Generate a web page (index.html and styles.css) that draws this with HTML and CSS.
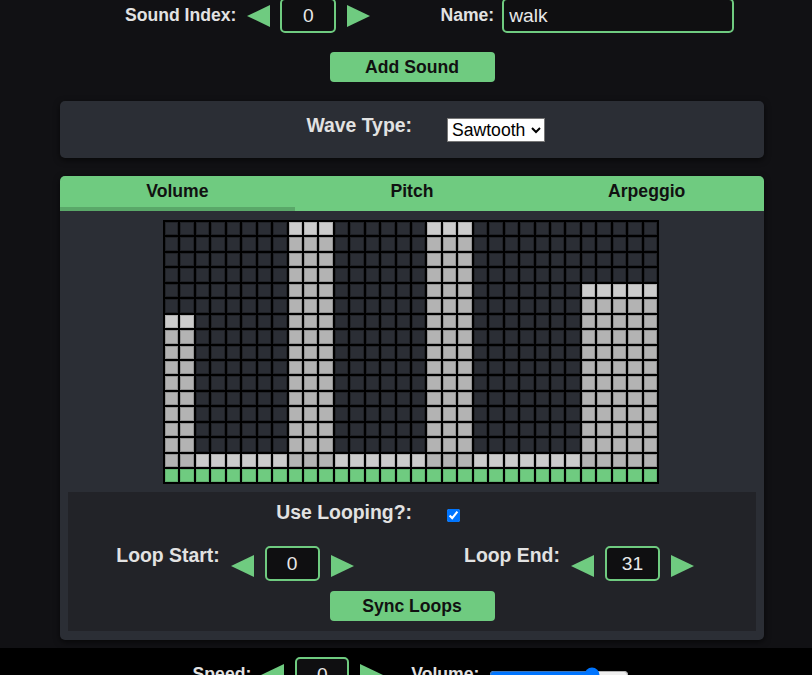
FILE: index.html
```html
<!DOCTYPE html>
<html lang="en">
<head>
<meta charset="utf-8">
<title>Sound Editor</title>
<link rel="stylesheet" href="styles.css">
</head>
<body>
<div class="app">
  <div class="top-row">
    <span class="label lbl-index">Sound Index:</span>
    <svg class="tri tri-l" viewBox="0 0 23 22"><polygon points="23,0 23,22 0,11"/></svg>
    <input class="num num-top" type="text" value="0">
    <svg class="tri tri-r" viewBox="0 0 23 22"><polygon points="0,0 0,22 23,11"/></svg>
    <span class="label lbl-name">Name:</span>
    <input class="name-input" type="text" value="walk">
  </div>
  <button class="btn btn-add">Add Sound</button>

  <section class="panel wave">
    <div class="field-row">
      <div class="field-label">Wave Type:</div>
      <div class="field-ctrl">
        <select class="wave-select">
          <option>Square</option>
          <option selected>Sawtooth</option>
          <option>Triangle</option>
          <option>Sine</option>
          <option>Noise</option>
        </select>
      </div>
    </div>
  </section>

  <section class="panel editor">
    <div class="tabs">
      <div class="tab active">Volume</div>
      <div class="tab">Pitch</div>
      <div class="tab">Arpeggio</div>
    </div>
    <div class="grid" id="grid"></div>
    <div class="loop">
      <div class="field-row">
        <div class="field-label">Use Looping?:</div>
        <div class="field-ctrl"><input class="check" type="checkbox" checked></div>
      </div>
      <div class="loop-rows">
        <div class="group">
          <div class="field-label">Loop Start:</div>
          <svg class="tri tri-l" viewBox="0 0 23 22"><polygon points="23,0 23,22 0,11"/></svg>
          <input class="num" type="text" value="0">
          <svg class="tri tri-r" viewBox="0 0 23 22"><polygon points="0,0 0,22 23,11"/></svg>
        </div>
        <div class="group">
          <div class="field-label">Loop End:</div>
          <svg class="tri tri-l" viewBox="0 0 23 22"><polygon points="23,0 23,22 0,11"/></svg>
          <input class="num" type="text" value="31">
          <svg class="tri tri-r" viewBox="0 0 23 22"><polygon points="0,0 0,22 23,11"/></svg>
        </div>
      </div>
      <button class="btn btn-sync">Sync Loops</button>
    </div>
  </section>
</div>
<footer class="footer">
  <div class="footer-inner">
    <span class="label lbl-speed">Speed:</span>
    <svg class="tri tri-l" viewBox="0 0 23 22"><polygon points="23,0 23,22 0,11"/></svg>
    <input class="num num-foot" type="text" value="0">
    <svg class="tri tri-r" viewBox="0 0 23 22"><polygon points="0,0 0,22 23,11"/></svg>
    <span class="label lbl-volume">Volume:</span>
    <input class="vol" type="range" min="0" max="100" value="76">
  </div>
</footer>
<script src="script.js"></script>
</body>
</html>
```

FILE: styles.css
```css
* { box-sizing: border-box; }

body {
  margin: 0;
  background: #111114;
  font-family: "Liberation Sans", Arial, sans-serif;
  color: #e2e2e2;
}

.app {
  width: 704px;
  margin-left: 60px;
}

/* top row */
.top-row {
  display: flex;
  align-items: center;
  height: 35px;
  margin-top: -2px;
  padding-left: 65px;
}

.label {
  font-weight: bold;
  font-size: 17.6px;
  color: #e2e2e2;
}

.tri {
  display: block;
  flex: none;
  width: 23px;
  height: 22px;
  fill: #6fcb80;
}

.num {
  flex: none;
  width: 55px;
  height: 35px;
  border: 2px solid #6fcb80;
  border-radius: 5px;
  background: #0f0f11;
  color: #e8e8e8;
  font-family: "Liberation Sans", Arial, sans-serif;
  font-size: 19.2px;
  text-align: center;
  padding: 0;
  outline: none;
}

.lbl-index { margin-right: 11px; }
.top-row .tri-l { margin-right: 10px; }
.num-top { width: 56px; }
.top-row .num { margin-right: 11px; }
.lbl-name { margin-left: 70px; margin-right: 8px; }

.name-input {
  width: 232px;
  height: 35px;
  border: 2px solid #6fcb80;
  border-radius: 5px;
  background: #0f0f11;
  color: #e8e8e8;
  font-family: "Liberation Sans", Arial, sans-serif;
  font-size: 19.2px;
  padding: 0 5px;
  outline: none;
}

/* buttons */
.btn {
  display: block;
  width: 165px;
  height: 30px;
  margin: 0 auto;
  border: none;
  border-radius: 4px;
  background: #6fcb80;
  color: #111;
  font-family: "Liberation Sans", Arial, sans-serif;
  font-weight: bold;
  font-size: 17.6px;
  padding: 0;
}

.btn-add { margin-top: 19px; }

/* panels */
.panel {
  background: #2b2e35;
  border-radius: 5px;
  box-shadow: 0 2px 6px rgba(0, 0, 0, 0.6);
}

.wave {
  margin-top: 19px;
  padding: 13px 0 16px;
}

.field-row {
  display: grid;
  grid-template-columns: 1fr 1fr;
  align-items: start;
}

.field-label {
  font-weight: bold;
  font-size: 19.4px;
  line-height: 22px;
  color: #e2e2e2;
  text-align: right;
  white-space: nowrap;
}

.field-ctrl {
  padding-left: 35px;
}

.wave-select {
  margin-top: 4px;
  width: 98px;
  height: 24px;
  font-family: "Liberation Sans", Arial, sans-serif;
  font-size: 17.6px;
  color: #000;
  background: #fff;
  border: 1px solid #767676;
  border-radius: 0;
}

/* editor */
.editor {
  margin-top: 18px;
  padding-bottom: 9px;
  overflow: hidden;
}

.tabs {
  display: flex;
  background: #6fcb80;
}

.tab {
  flex: 1;
  height: 35px;
  display: flex;
  align-items: center;
  justify-content: center;
  border-bottom: 4px solid transparent;
  font-weight: bold;
  font-size: 17.6px;
  color: #111;
}

.tab.active { border-bottom-color: #5aa869; }

.grid {
  width: 496px;
  margin: 9px 0 0 103px;
  padding: 2px;
  display: grid;
  grid-template-columns: repeat(32, 1fr);
  gap: 2px;
  background: #000;
}

.cell {
  aspect-ratio: 1;
  background: #2b2e35;
  box-shadow: inset 0 0 0 1px rgba(0, 0, 0, 0.25);
}

.cell.on { background: #b3b3b3; box-shadow: inset 0 0 0 1px rgba(0, 0, 0, 0.18); }
.cell.top { background: #cccccc; box-shadow: inset 0 0 0 1px rgba(0, 0, 0, 0.15); }
.cell.base { background: #6fcb80; box-shadow: inset 0 0 0 1px rgba(0, 0, 0, 0.12); }

/* loop section */
.loop {
  margin: 8px 8px 0;
  background: #222328;
  padding: 9px 0 10px;
}

.check {
  display: block;
  margin: 8px 0 0;
  width: 13px;
  height: 13px;
}

.loop-rows {
  display: grid;
  grid-template-columns: 1fr 1fr;
  margin-top: 20px;
}

.group {
  display: flex;
  justify-content: center;
  align-items: flex-start;
  padding-right: 10px;
}

.group .field-label { margin-right: 11px; padding-top: 1px; }
.group .tri { margin-top: 12px; }
.group .num { margin: 3px 11px 0; }

.btn-sync { margin-top: 10px; }

/* footer */
.footer {
  margin-top: 8px;
  background: #000;
  padding-top: 9px;
  height: 60px;
}

.footer-inner {
  width: 704px;
  margin-left: 60px;
  display: flex;
  justify-content: center;
  align-items: center;
}

.lbl-speed { margin-right: 10px; }
.num-foot { width: 54px; margin: 0 11px; }
.lbl-volume { margin-left: 28px; margin-right: 8px; }

.vol {
  width: 140px;
  margin: 0 2px;
}
```

FILE: script.js
```js
var vals = [10,10,1,1,1,1,1,1,16,16,16,1,1,1,1,1,1,16,16,16,1,1,1,1,1,1,1,12,12,12,12,12];
var grid = document.getElementById('grid');
for (var r = 0; r < 17; r++) {
  for (var c = 0; c < 32; c++) {
    var d = document.createElement('div');
    d.className = 'cell';
    if (r === 16) {
      d.classList.add('base');
    } else {
      var t = 16 - vals[c];
      if (r === t) d.classList.add('top');
      else if (r > t) d.classList.add('on');
    }
    grid.appendChild(d);
  }
}
```
